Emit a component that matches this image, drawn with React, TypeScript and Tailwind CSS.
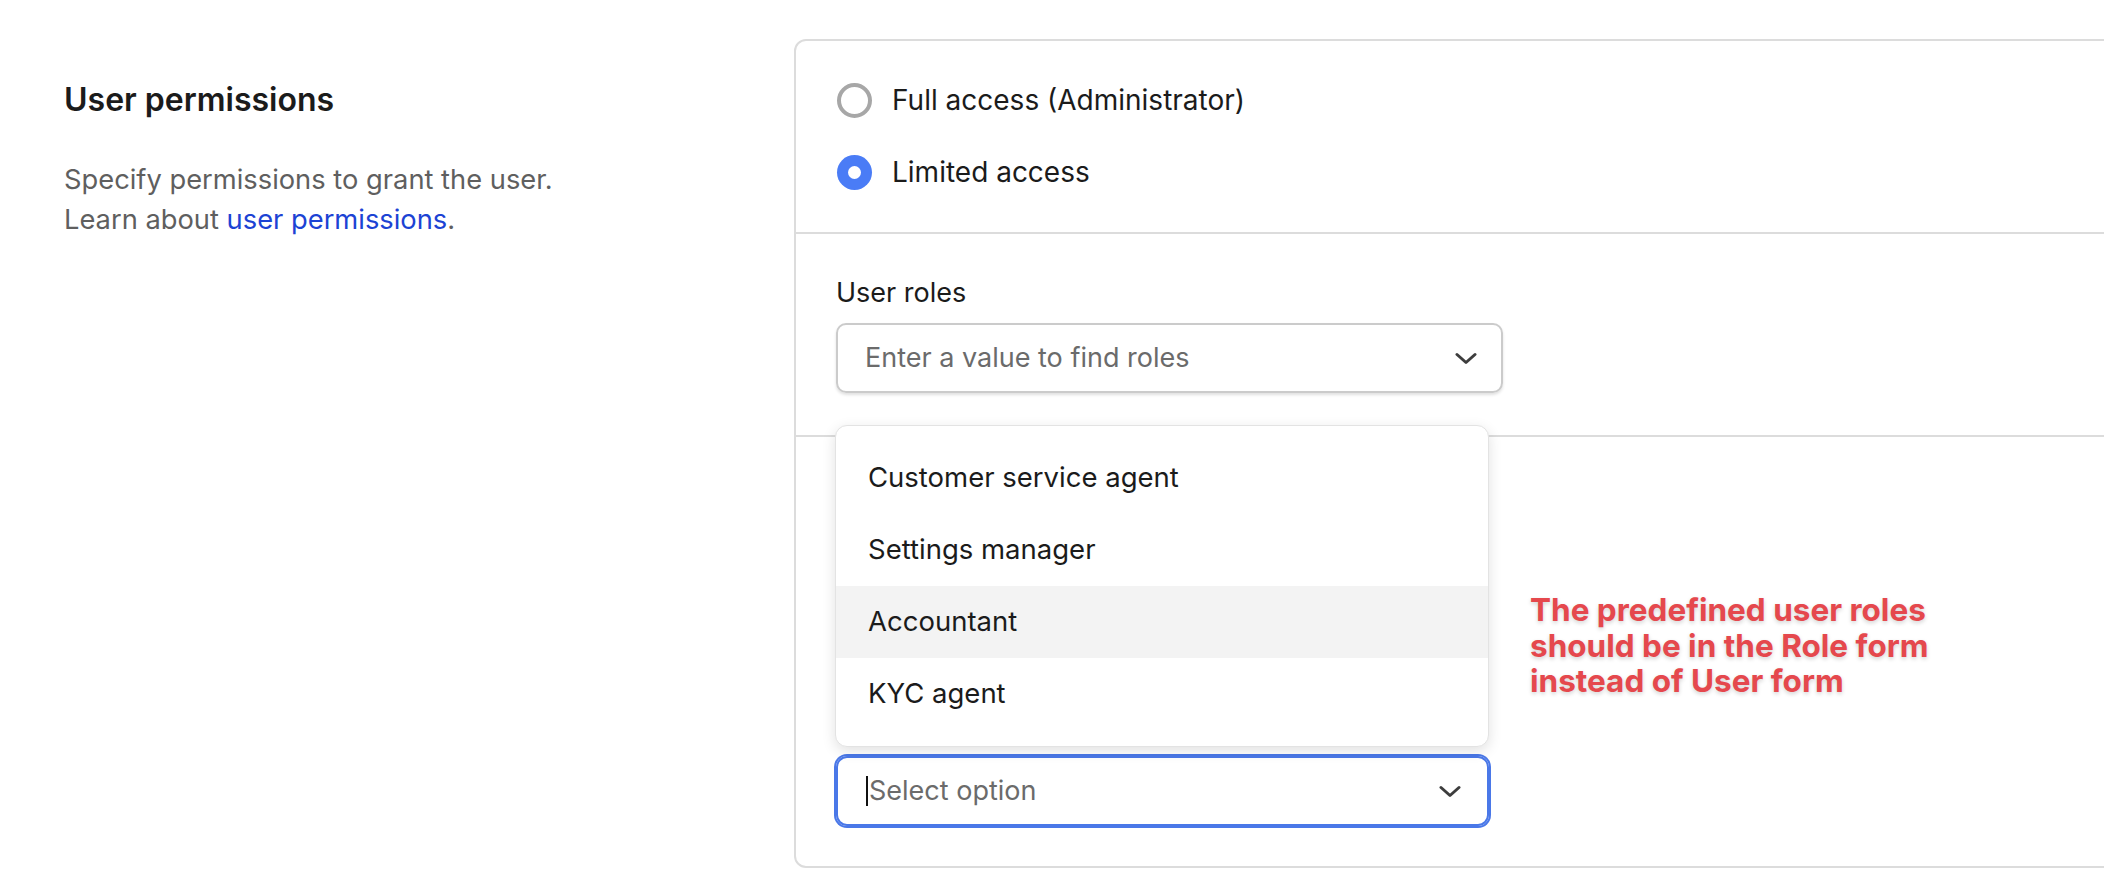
import { useState } from "react";

// Roles shown in the open dropdown above the focused select.
const roleOptions = [
  "Customer service agent",
  "Settings manager",
  "Accountant",
  "KYC agent",
];

function Chevron() {
  return (
    <svg width="22" height="13" viewBox="0 0 22 13" fill="none" className="shrink-0">
      <path
        d="M2 2.5 L11 10.5 L20 2.5"
        stroke="#3d3d3d"
        strokeWidth="3"
        strokeLinecap="round"
        strokeLinejoin="round"
      />
    </svg>
  );
}

function Radio({ checked, label }: { checked: boolean; label: string }) {
  return (
    <label className="flex h-[36px] items-center gap-[20px]">
      {checked ? (
        <span className="flex h-[35px] w-[35px] items-center justify-center rounded-full bg-[#4a7cf6]">
          <span className="h-[13px] w-[13px] rounded-full bg-white" />
        </span>
      ) : (
        <span className="h-[35px] w-[35px] rounded-full border-[4px] border-[#a7a7a7]" />
      )}
      <span className="text-[28px] leading-[36px] text-[#1b1b1b]">{label}</span>
    </label>
  );
}

export default function App() {
  const [hovered] = useState("Accountant");

  return (
    <div className="h-[882px] w-[2104px] overflow-hidden bg-white font-['Inter','Liberation_Sans',sans-serif] text-[#1b1b1b]">
      <div className="flex pt-[39px]">
        <div className="w-[794px] shrink-0 pl-[64px] pt-[41px]">
          <h2 className="text-[32px] font-semibold leading-[40px]">User permissions</h2>
          <p className="mt-[40px] text-[27.3px] leading-[40px] text-[#5f5f5f]">
            Specify permissions to grant the user.
            <br />
            Learn about <span className="text-[#1c43d4]">user permissions</span>.
          </p>
        </div>

        <div className="w-[1340px] shrink-0 rounded-[12px] border-2 border-[#dcdcdc]">
          <div className="flex flex-col gap-[36px] pb-[42px] pl-[41px] pt-[41px]">
            <Radio checked={false} label="Full access (Administrator)" />
            <Radio checked label="Limited access" />
          </div>

          <div className="border-t-2 border-[#dcdcdc] pb-[42px] pl-[40px] pt-[39px]">
            <p className="text-[27px] leading-[40px]">User roles</p>
            <div className="mt-[10px] flex h-[70px] w-[667px] items-center justify-between rounded-[10px] border-2 border-[#cbcbcb] pl-[27px] pr-[24px] shadow-[0_2px_3px_rgba(0,0,0,0.12)]">
              <span className="text-[27px] text-[#6b6b6b]">Enter a value to find roles</span>
              <Chevron />
            </div>
          </div>

          <div className="flex gap-[41px] border-t-2 border-[#dcdcdc] pb-[40px] pl-[40px]">
            <div className="relative mt-[319px] w-[653px] shrink-0">
              <ul className="absolute bottom-full left-[-1px] mb-[9px] w-[654px] rounded-[12px] border border-[#e3e3e3] bg-white py-[16px] shadow-[0_4px_14px_rgba(0,0,0,0.12)]">
                {roleOptions.map((role) => (
                  <li
                    key={role}
                    className={`flex h-[72px] items-center px-[32px] text-[27.5px] ${
                      role === hovered ? "bg-[#f3f3f3]" : ""
                    }`}
                  >
                    {role}
                  </li>
                ))}
              </ul>
              <div className="flex h-[70px] items-center justify-between rounded-[11px] border-2 border-[#4a78e8] pl-[28px] pr-[26px] ring-2 ring-[#4a78e8]">
                <span className="flex items-center text-[27px] text-[#6b6b6b]">
                  <span className="mr-[1px] h-[30px] w-[2px] bg-[#111]" />
                  Select option
                </span>
                <Chevron />
              </div>
            </div>

            <p className="pt-[155px] text-[31.5px] font-bold leading-[35.5px] text-[#e5484d] [text-shadow:0_2px_4px_rgba(0,0,0,0.18)]">
              <span className="block">The predefined user roles</span>
              <span className="block">should be in the Role form</span>
              <span className="block">instead of User form</span>
            </p>
          </div>
        </div>
      </div>
    </div>
  );
}
